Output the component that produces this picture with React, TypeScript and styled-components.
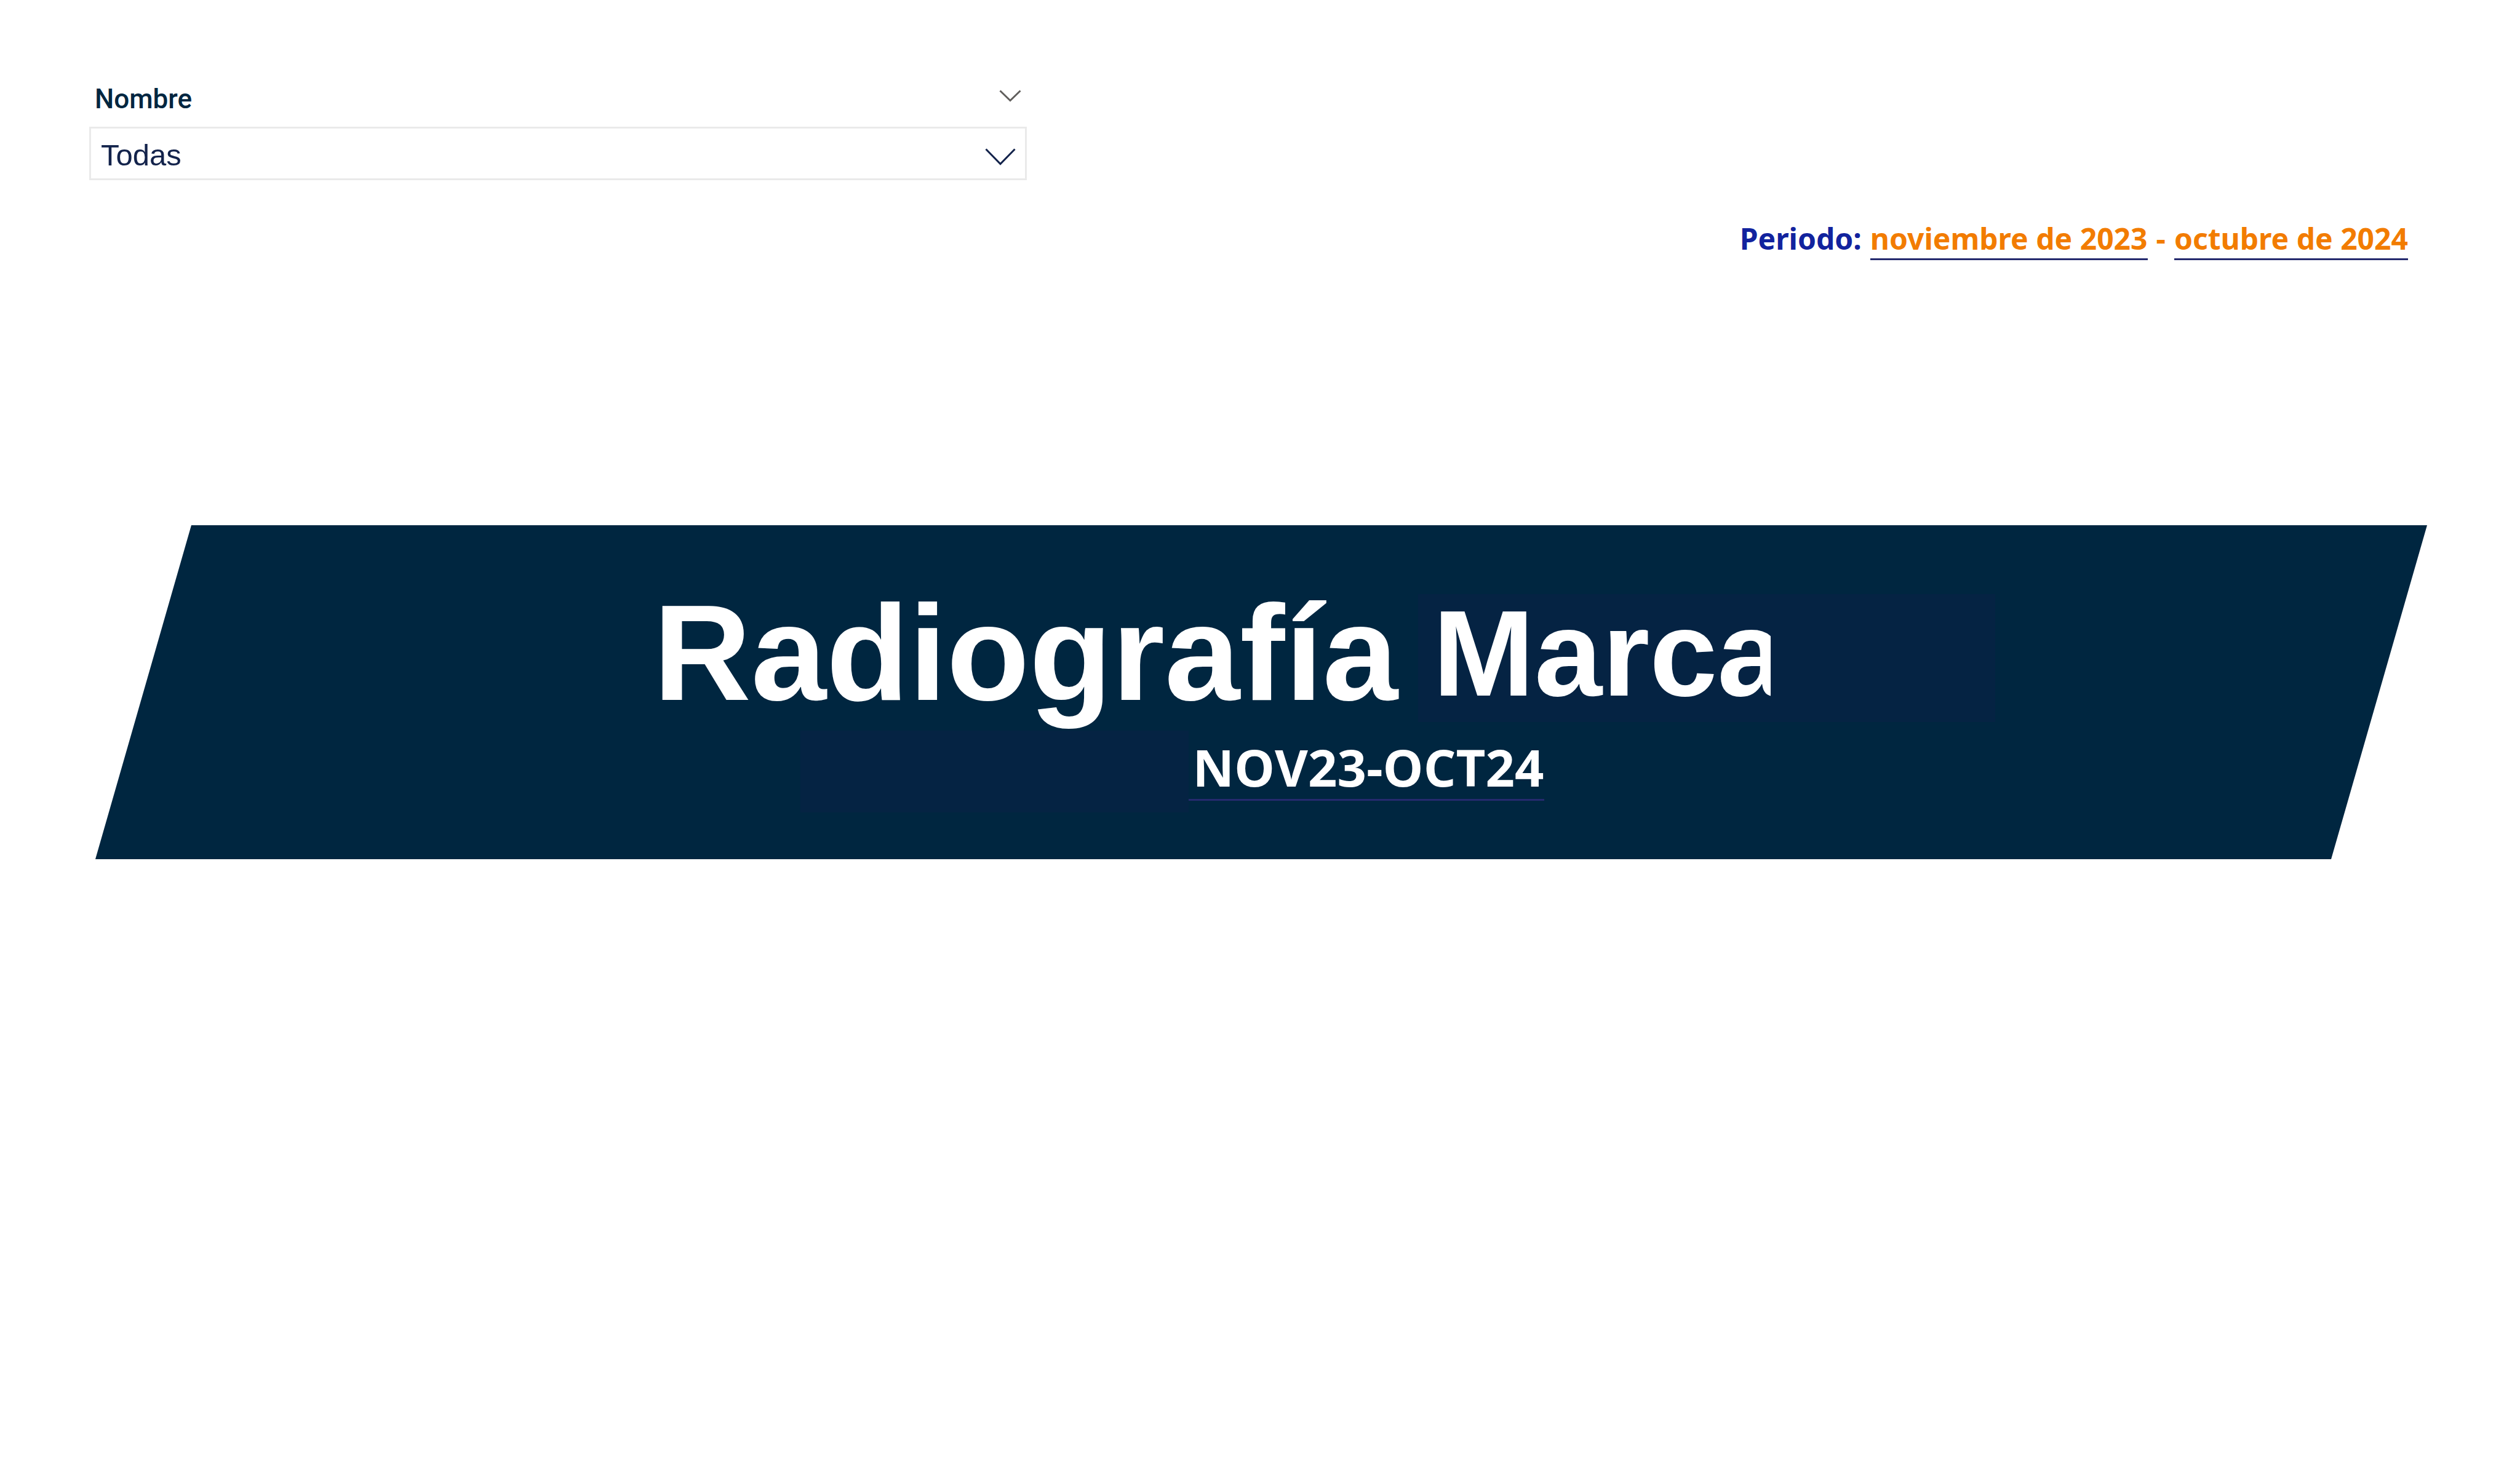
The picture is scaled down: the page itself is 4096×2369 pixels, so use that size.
import React, { useState } from "react";
import styled, { createGlobalStyle } from "styled-components";

const color = {
  navy: "#002640",
  panel: "#052343",
  ink: "#13234b",
  period: "#12239e",
  accent: "#f27c00",
  underline: "#252a6e",
  border: "#eaeaea",
  muted: "#605e5c",
};

const sans = `"Liberation Sans", Arial, sans-serif`;
const humanist = `"Noto Sans", "Open Sans", sans-serif`;

const GlobalStyle = createGlobalStyle`
  *, *::before, *::after { box-sizing: border-box; }
  body { margin: 0; background: #ffffff; font-family: ${sans}; }
`;

const Page = styled.main`
  display: flex;
  flex-direction: column;
  padding: 131px 0;
`;

const Filter = styled.section`
  display: flex;
  flex-direction: column;
  gap: 15px;
  width: 37.2vw;
  margin-left: 145px;
`;

const FilterHeader = styled.div`
  display: flex;
  justify-content: space-between;
  padding: 0 9px;
`;

const FilterLabel = styled.label`
  color: ${color.navy};
  font: 500 44px/60px Roboto, sans-serif;
`;

const IconButton = styled.button`
  display: flex;
  align-items: center;
  height: 50px;
  padding: 0;
  border: 0;
  background: none;
  color: ${color.muted};
  cursor: pointer;
`;

const SelectBox = styled.div`
  display: grid;
  align-items: center;
  color: ${color.ink};

  > * {
    grid-area: 1 / 1;
  }

  > svg {
    justify-self: end;
    margin: 10px 18px 0 0;
    pointer-events: none;
  }
`;

const Select = styled.select`
  width: 100%;
  height: 87px;
  padding: 4px 80px 0 16px;
  border: 3px solid ${color.border};
  border-radius: 0;
  appearance: none;
  background: #ffffff;
  color: inherit;
  font: 49px ${sans};
`;

const Period = styled.p`
  display: flex;
  justify-content: flex-end;
  align-items: flex-start;
  gap: 14px;
  margin: 67px 182px 0 0;
  color: ${color.accent};
  font: 700 48px/56px ${humanist};
`;

const PeriodLabel = styled.span`
  color: ${color.period};
`;

const PeriodValue = styled.span`
  padding-bottom: 4px;
  border-bottom: 3px solid ${color.underline};
`;

const Banner = styled.section`
  display: flex;
  flex-direction: column;
  gap: 14px;
  margin: 431px 151px 0 155px;
  padding: 112px 0 76px;
  background: ${color.navy};
  color: #ffffff;
  clip-path: polygon(156px 0, 100% 0, calc(100% - 156px) 100%, 0 100%);
`;

const TitleRow = styled.div`
  display: flex;
  justify-content: center;
  align-items: flex-start;
  gap: 33px;
  padding-left: 205px;
`;

const Title = styled.h1`
  margin: 0;
  font: 700 220px/192px ${sans};
`;

const BrandPanel = styled.div`
  width: 938px;
  height: 208px;
  padding-left: 24px;
  background: ${color.panel};
`;

const Brand = styled.div`
  width: 549px;
  overflow: hidden;
  font: 700 198px/194px ${sans};
`;

const RangeRow = styled.div`
  display: flex;
  justify-content: center;
  align-items: flex-start;
  padding-right: 289px;
`;

const RangePanel = styled.div`
  width: 631px;
  height: 133px;
  background: ${color.panel};
`;

const Range = styled.span`
  padding: 6px 0 0 6px;
  border-bottom: 3px solid ${color.underline};
  font: 700 83px/105px "Open Sans", ${humanist};
`;

const Chevron = ({ width, height }: { width: number; height: number }) => (
  <svg width={width} height={height} viewBox={`0 0 ${width} ${height}`} fill="none" aria-hidden="true">
    <path
      d={`M1.5 1.5L${width / 2} ${height - 2.5}L${width - 1.5} 1.5`}
      stroke="currentColor"
      strokeWidth="3"
    />
  </svg>
);

export default function App() {
  const [name, setName] = useState("Todas");

  return (
    <>
      <GlobalStyle />
      <Page>
        <Filter>
          <FilterHeader>
            <FilterLabel htmlFor="nombre">Nombre</FilterLabel>
            <IconButton type="button" aria-label="Opciones de Nombre">
              <Chevron width={36} height={20} />
            </IconButton>
          </FilterHeader>
          <SelectBox>
            <Select id="nombre" value={name} onChange={(e) => setName(e.target.value)}>
              <option>Todas</option>
            </Select>
            <Chevron width={50} height={28} />
          </SelectBox>
        </Filter>

        <Period>
          <PeriodLabel>Periodo:</PeriodLabel>
          <PeriodValue>noviembre de 2023</PeriodValue>
          <span>-</span>
          <PeriodValue>octubre de 2024</PeriodValue>
        </Period>

        <Banner>
          <TitleRow>
            <Title>Radiografía</Title>
            <BrandPanel>
              <Brand>Marca</Brand>
            </BrandPanel>
          </TitleRow>
          <RangeRow>
            <RangePanel />
            <Range>NOV23-OCT24</Range>
          </RangeRow>
        </Banner>
      </Page>
    </>
  );
}
